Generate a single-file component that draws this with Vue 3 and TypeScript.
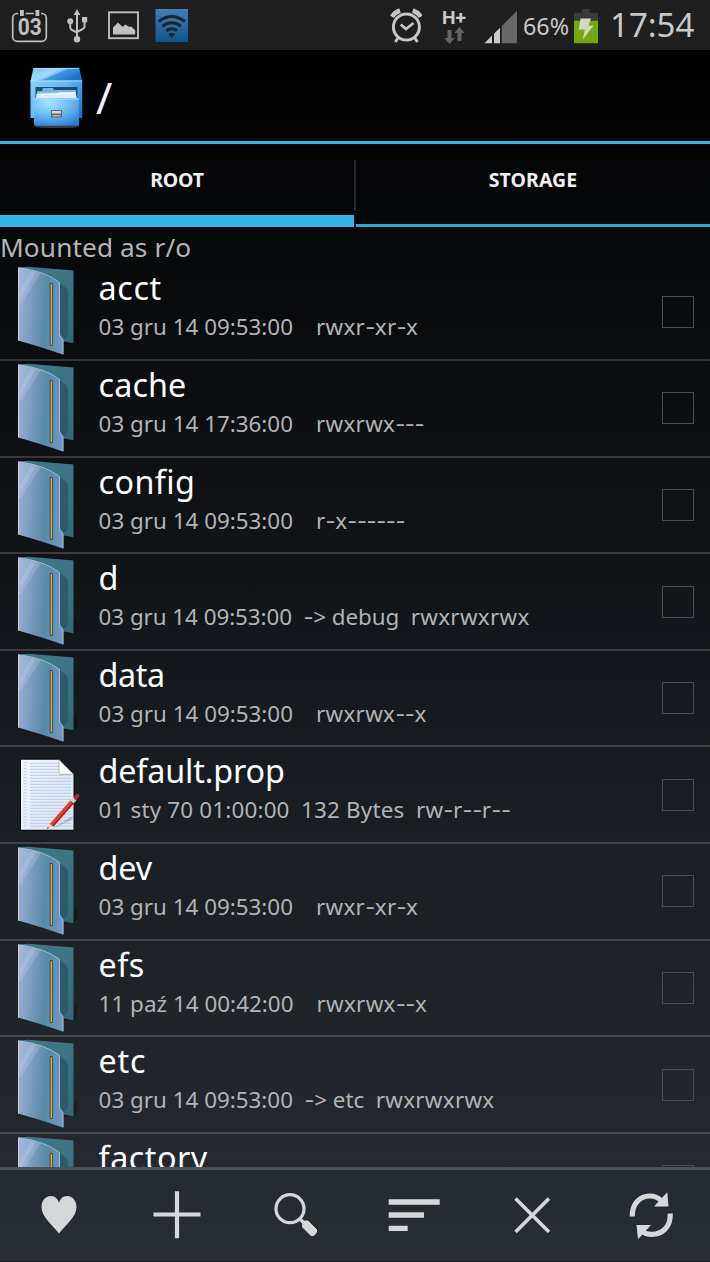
<script setup lang="ts">
interface Entry {
  name: string
  date: string
  info: string
  perms: string
  kind: 'folder' | 'file'
  // Letter spacing in px for the name and for the date/info part of the line below.
  nameTrack: number
  metaTrack: number
}

const entries: Entry[] = [
  { name: 'acct', date: '03 gru 14 09:53:00', info: '', perms: 'rwxr-xr-x', kind: 'folder', nameTrack: 0.6, metaTrack: 0 },
  { name: 'cache', date: '03 gru 14 17:36:00', info: '', perms: 'rwxrwx---', kind: 'folder', nameTrack: 0.1, metaTrack: 0 },
  { name: 'config', date: '03 gru 14 09:53:00', info: '', perms: 'r-x------', kind: 'folder', nameTrack: 0.4, metaTrack: 0 },
  { name: 'd', date: '03 gru 14 09:53:00', info: '-> debug', perms: 'rwxrwxrwx', kind: 'folder', nameTrack: 0, metaTrack: -0.05 },
  { name: 'data', date: '03 gru 14 09:53:00', info: '', perms: 'rwxrwx--x', kind: 'folder', nameTrack: -0.4, metaTrack: 0 },
  { name: 'default.prop', date: '01 sty 70 01:00:00', info: '132 Bytes', perms: 'rw-r--r--', kind: 'file', nameTrack: -0.15, metaTrack: 0.18 },
  { name: 'dev', date: '03 gru 14 09:53:00', info: '', perms: 'rwxr-xr-x', kind: 'folder', nameTrack: -0.1, metaTrack: 0 },
  { name: 'efs', date: '11 paź 14 00:42:00', info: '', perms: 'rwxrwx--x', kind: 'folder', nameTrack: 0.4, metaTrack: 0.03 },
  { name: 'etc', date: '03 gru 14 09:53:00', info: '-> etc', perms: 'rwxrwxrwx', kind: 'folder', nameTrack: 0.8, metaTrack: 0 },
  { name: 'factory', date: '03 gru 14 09:53:00', info: '', perms: 'r-x------', kind: 'folder', nameTrack: 0.5, metaTrack: 0 },
]

// Hyphens are drawn in a wider face than letters, so the string is split into runs.
const runs = (text: string): string[] => text.match(/-+|[^-]+/g) ?? []
</script>

<template>
  <div class="screen">
    <svg class="defs" width="0" height="0" aria-hidden="true">
      <defs>
        <linearGradient id="cover" x1="0" y1="0" x2="1" y2="0.1">
          <stop offset="0" stop-color="#9fb1d4" />
          <stop offset="0.3" stop-color="#7d9ec2" />
          <stop offset="0.65" stop-color="#568aa7" />
          <stop offset="1" stop-color="#7196bd" />
        </linearGradient>
        <linearGradient id="back" x1="0" y1="0" x2="0" y2="1">
          <stop offset="0" stop-color="#3f7787" />
          <stop offset="1" stop-color="#336773" />
        </linearGradient>
        <linearGradient id="paper" x1="0" y1="0" x2="1" y2="1">
          <stop offset="0" stop-color="#f3f6fd" />
          <stop offset="1" stop-color="#dbe4f5" />
        </linearGradient>
        <linearGradient id="wifi" x1="0" y1="0" x2="0" y2="1">
          <stop offset="0" stop-color="#3f80b7" />
          <stop offset="1" stop-color="#11558f" />
        </linearGradient>
        <linearGradient id="cabTop" x1="0" y1="0" x2="1" y2="0.5">
          <stop offset="0" stop-color="#52b2f2" />
          <stop offset="0.45" stop-color="#8dd1fb" />
          <stop offset="0.6" stop-color="#3f99e6" />
          <stop offset="1" stop-color="#1c71cc" />
        </linearGradient>
        <linearGradient id="cabBody" x1="0" y1="0" x2="1" y2="0.7">
          <stop offset="0" stop-color="#8bd3fc" />
          <stop offset="0.5" stop-color="#62b6f3" />
          <stop offset="1" stop-color="#2276cd" />
        </linearGradient>
        <radialGradient id="cabDrawer" cx="0.35" cy="0.15" r="1">
          <stop offset="0" stop-color="#a6e4ff" />
          <stop offset="0.5" stop-color="#66b9f4" />
          <stop offset="1" stop-color="#2776c9" />
        </radialGradient>
      </defs>
    </svg>

    <header class="status">
      <svg class="cal" width="38" height="36" viewBox="11 8 38 36">
        <rect x="12.700" y="13.500" width="33.600" height="27.800" rx="4.500" fill="none" stroke="#bfbfbf" stroke-width="1.700" />
        <path d="M18.200 13.500h7.400M33.700 13.500h7.400" stroke="#1f1f1f" stroke-width="4" />
        <path d="M20 10h3.800v6H20zM35.500 10h3.800v6h-3.800z" fill="#bfbfbf" />
        <text x="29.700" y="35" text-anchor="middle" class="cal-text" textLength="24" lengthAdjust="spacingAndGlyphs">03</text>
      </svg>
      <svg class="usb" width="24" height="36" viewBox="65 8 24 36">
        <g fill="none" stroke="#bfbfbf" stroke-width="2">
          <path d="M77 14v24M70.200 22v5.500q0 1.500 1.500 2.300l5.300 2.700M84.500 20v6.500q0 1.500-1.500 2.300l-6 3.200" />
        </g>
        <path d="M77 9l3.300 6h-6.600zM82 17h5.200v5.200H82z" fill="#bfbfbf" />
        <circle cx="70.200" cy="21.300" r="3" fill="#bfbfbf" />
        <circle cx="77" cy="39.200" r="3.200" fill="#bfbfbf" />
      </svg>
      <svg class="pic" width="31" height="36" viewBox="108 8 31 36">
        <rect x="109" y="12.300" width="29" height="25.900" fill="none" stroke="#bfbfbf" stroke-width="1.900" />
        <path d="M113 34.500v-7l5-5 4.500 4.200 3-2.200 3.300 2.300 2.400-.3 4 3.700v4.300z" fill="#bfbfbf" />
      </svg>
      <svg class="wifi" width="33" height="36" viewBox="155 8 33 36">
        <rect x="155.500" y="9" width="32.500" height="33" fill="url(#wifi)" />
        <g fill="none" stroke="#1f2429" stroke-width="3">
          <path d="M158.500 21.500q13.200-10 26.400 0M162.300 26.300q9.400-7 18.800 0M166.300 30.800q5.400-4 10.800 0" />
        </g>
        <path d="M168.300 34.300q3.400-2.500 6.800 0l-3.400 3.600z" fill="#1f2429" />
      </svg>
      <span class="spacer"></span>
      <svg class="alarm" width="32" height="36" viewBox="390 8 32 36">
        <g fill="none" stroke="#c6c6c6">
          <circle cx="406.400" cy="27" r="13" stroke-width="3" />
          <path d="M400.700 24.500l5.300 4.500 7.500-6" stroke-width="2.800" />
          <path d="M392 16.800q3-4.600 8-6.300M420.800 16.800q-3-4.600-8-6.300" stroke-width="4.600" />
          <path d="M398 38l-2.700 4M414.800 38l2.700 4" stroke-width="3" />
        </g>
      </svg>
      <svg class="net" width="26" height="36" viewBox="441 8 26 36">
        <text x="442" y="24" class="net-text" textLength="24" lengthAdjust="spacingAndGlyphs">H+</text>
        <path d="M447.500 30h4v8h3.200l-5.200 6-5.200-6h3.200zM457.500 41v-8h-3.200l5.200-6 5.200 6h-3.200v8z" fill="#666" />
      </svg>
      <svg class="signal" width="33" height="36" viewBox="484 8 33 36">
        <path d="M501.800 43.200V26l15.200-15.200v32.400z" fill="#686868" />
        <path d="M484.500 43.200l7.500-7.700v7.700zM494 43.200v-9.500l6-6v15.500z" fill="#cacaca" />
      </svg>
      <span class="percent">66%</span>
      <svg class="battery" width="24" height="36" viewBox="574 8 24 36">
        <path d="M574 12.800h8V9h7.500v3.800h8.500V22h-24z" fill="#3a3a3a" />
        <path d="M574 20.700h24v22.500h-24z" fill="#78a70d" />
        <path d="M580.500 18.500h10.500l-2.500 7.300h5l-10.700 13.700 2-10h-6z" fill="#d3d7c6" />
      </svg>
      <span class="clock">17:54</span>
    </header>

    <div class="title">
      <svg class="cabinet" width="56" height="64" viewBox="28 66 56 64">
        <ellipse cx="57" cy="126.500" rx="22" ry="1.600" fill="#3a3a3a" />
        <path d="M33.500 68h45.700l3 13H30.500z" fill="url(#cabTop)" />
        <path d="M33.500 68.400h45.700" stroke="#9ed9fb" />
        <path d="M33.500 69h34L42 80H31z" fill="#c6ebff" opacity=".35" />
        <path d="M30.500 80.500h51.700V118h-3.200v7.500H34.200V118h-3.700z" fill="url(#cabBody)" />
        <path d="M30.500 81h51.700" stroke="#a9e0ff" />
        <path d="M35.500 87h42v11h-42z" fill="#28496f" />
        <path d="M37 91h5l1-3h10l1 2h22v8H37z" fill="#75b9e8" />
        <path d="M36.500 93.500l39-1.500 1.300 6H36z" fill="#d9eefb" />
        <path d="M38 94.500h20l1.500-1.500H75" fill="none" stroke="#fff" stroke-width="1.200" />
        <path d="M34.200 98.500h44.500v27H34.200z" fill="url(#cabDrawer)" />
        <path d="M34.200 99h44.500" stroke="#b8e7ff" />
        <path d="M51 110h11v7.500H51z" fill="#65686a" />
        <path d="M52 111h9v2.500h-9z" fill="#d8d8d6" />
        <path d="M52.500 115h8v1.500h-8z" fill="#b5b5b0" />
        <circle cx="74.700" cy="103.700" r="1.600" fill="#9b9b95" />
      </svg>
      <span class="path">/</span>
    </div>

    <nav class="tabs">
      <div class="tab active"><span>ROOT</span></div>
      <i class="divider"></i>
      <div class="tab storage"><span>STORAGE</span></div>
    </nav>

    <div class="mount">Mounted as r/o</div>

    <main class="list">
      <div v-for="entry in entries" :key="entry.name" class="row">
        <svg v-if="entry.kind === 'folder'" class="icon" width="66" height="92" viewBox="0 0 66 92">
          <path d="M46 78l12-1q5-1 3-9v-8" fill="#000" opacity=".25" />
          <path d="M2 1.500L12 .700 57.500 4.500V77.200L40 74z" fill="url(#back)" />
          <path d="M44 17l5 4q3 2 3 7v38q-1 8-5 6l-4-8z" fill="#254f5a" opacity=".6" />
          <path d="M2 1.500Q29 5 43.700 16.500V69l3.700 5v14.700Q22 80 2 74.500z" fill="url(#cover)" />
          <path d="M3 2l22 5L5 38H3z" fill="#c8d5ee" opacity=".25" />
          <path d="M15 5l5 1L4 33v-8z" fill="#d3def2" opacity=".22" />
          <path d="M2.500 1.800Q29 5 43.500 16.500V69l3.500 5v14" fill="none" stroke="#a1bfdb" stroke-width=".9" />
          <path d="M2.500 2v72.500" stroke="#c2d2e9" />
          <rect x="33.700" y="17" width="3" height="63" rx="1.300" fill="#3b3a31" />
          <path d="M35.300 18v61" stroke="#c9ad6b" stroke-width="1.400" />
        </svg>
        <svg v-else class="icon" width="66" height="92" viewBox="0.500 2.700 66 92">
          <path d="M4.500 12.500h39L59 27.500v57H4.500z" fill="#050505" opacity=".7" />
          <path d="M5.500 13.500h38L58 28v55.500H5.500z" fill="url(#paper)" />
          <path d="M14.500 17h29M14.500 20h29M14.500 23h29M14.500 26h29M14.500 29h41M14.500 32h41M14.500 35h41M14.500 38h41M14.500 41h41M14.500 44h41M14.500 47h41M14.500 50h41M14.500 53h41M14.500 56h41M14.500 59h41M14.500 62h41M14.500 65h41M14.500 68h41M14.500 71h41M14.500 74h41M14.500 77h41M14.500 80h41" stroke="#b9c7e2" stroke-width=".9" />
          <path d="M9.500 16v66" stroke="#c3cbe0" stroke-width="3" stroke-dasharray="1 2" />
          <path d="M43.500 13.500L58 28H43.500z" fill="#fff" stroke="#9a9da4" stroke-width=".7" />
          <path d="M37 82l20-12v3L42 80z" fill="#687082" opacity=".4" />
          <path d="M31 83l3.500-6 3.500 3.500z" fill="#e5d9cb" />
          <path d="M31 83l1.400-2.300 1.100 1.100z" fill="#444" />
          <path d="M36.300 79l21.500-24.500" stroke="#a51b17" stroke-width="4.400" />
          <path d="M35.800 78.500l21.500-24.500" stroke="#f23c30" stroke-width="2.800" />
          <path d="M56.500 55.500l3-3.300" stroke="#c9d3da" stroke-width="4.500" />
          <path d="M60.300 51.500l1.700-2" stroke="#c2271f" stroke-width="3.800" stroke-linecap="round" />
        </svg>
        <div class="text">
          <div class="name" :style="{ letterSpacing: entry.nameTrack + 'px' }">{{ entry.name }}</div>
          <div class="meta" :style="{ letterSpacing: entry.metaTrack + 'px' }">
            <span>{{ entry.date }}</span><span class="info"><span
              v-for="(run, i) in runs(entry.info)" :key="i" :class="{ dash: run[0] === '-' }">{{ run }}</span></span><span
              class="perms"><span v-for="(run, i) in runs(entry.perms)" :key="i" :class="{ dash: run[0] === '-' }">{{ run }}</span></span>
          </div>
        </div>
        <span class="box"></span>
      </div>
    </main>

    <footer class="bar">
      <div class="action">
        <svg width="60" height="60" viewBox="0 0 60 60">
          <path d="M30 49.500C23.500 41 12.500 33 12.500 23c0-6 3.700-11 9.300-11 4.200 0 7.200 2.800 8.200 7 1-4.200 4-7 8.200-7C43.800 12 47.500 17 47.500 23c0 10-11 18-17.500 26.500z" fill="#d6d7d9" />
        </svg>
      </div>
      <div class="action">
        <svg width="60" height="60" viewBox="0 0 60 60">
          <path d="M30 7.300v47M6.500 30.500h47" stroke="#d6d7d9" stroke-width="4.200" />
        </svg>
      </div>
      <div class="action">
        <svg width="60" height="60" viewBox="0 0 60 60">
          <circle cx="24" cy="24.700" r="14" fill="none" stroke="#d6d7d9" stroke-width="3.200" />
          <path d="M33 34l5 5" stroke="#d6d7d9" stroke-width="3.400" />
          <path d="M37 38.500l1.800-1.500h3.200l8.500 8.500v2.500l-2.500 3.500h-3L36.500 43z" fill="#d6d7d9" stroke="#d6d7d9" stroke-linejoin="round" />
        </svg>
      </div>
      <div class="action">
        <svg width="60" height="60" viewBox="0 0 60 60">
          <path d="M4.700 15.300h51v5.400h-51zM4.700 28.300h35.300v5.500H4.700zM4.700 41.700h19v5.300h-19z" fill="#d6d7d9" />
        </svg>
      </div>
      <div class="action">
        <svg width="60" height="60" viewBox="0 0 60 60">
          <path d="M13.500 14.500l33.500 33.500M47 14.500L13.500 48" stroke="#d6d7d9" stroke-width="3.600" />
        </svg>
      </div>
      <div class="action">
        <svg width="60" height="60" viewBox="0 0 60 60">
          <g fill="none" stroke="#d6d7d9" stroke-width="5.200">
            <path d="M11.300 32.500C11 19 19.500 12.200 28.500 12q7-.2 12 5" />
            <path d="M49.200 29.500C50 43.500 40.500 50.300 31 50.400q-7 .1-11-4" />
          </g>
          <path d="M46.300 8.300l1.200 14.200H33zM17 55.300l-1.500-14.300H30z" fill="#d6d7d9" />
        </svg>
      </div>
    </footer>
  </div>
</template>

<style>
html,
body {
  margin: 0;
  background: #000;
}
</style>

<style scoped>
.screen {
  width: 710px;
  height: 1262px;
  overflow: hidden;
  display: flex;
  flex-direction: column;
  position: relative;
  font-family: "Noto Sans", "Open Sans", sans-serif;
  background: linear-gradient(#000 50px, #08090b 250px, #14171b 650px, #202429 1000px, #282c33 1262px);
}

.defs {
  position: absolute;
}

svg {
  display: block;
  flex: none;
}

.status {
  flex: none;
  height: 50px;
  box-sizing: border-box;
  padding: 8px 14px 0 11px;
  display: flex;
  align-items: flex-start;
  background: #1f1f1f;
  color: #c9c9c9;
}

.cal-text {
  font: bold 23.5px Roboto, sans-serif;
  fill: #bfbfbf;
}

.net-text {
  font: bold 18.5px Roboto, sans-serif;
  fill: #c9c9c9;
}

.usb {
  margin-left: 16px;
}

.pic {
  margin-left: 19px;
}

.wifi {
  margin-left: 16px;
}

.spacer {
  flex: 1;
}

.net {
  margin-left: 19px;
}

.signal {
  margin-left: 17px;
}

.percent {
  width: 50px;
  margin-left: 6px;
  font-size: 23.3px;
  line-height: 36px;
}

.battery {
  margin-left: 1px;
}

.clock {
  width: 86px;
  margin-left: 12px;
  font-size: 33px;
  line-height: 34px;
  white-space: nowrap;
}

.title {
  flex: none;
  height: 91px;
  display: flex;
  padding-left: 28px;
  border-bottom: 3px solid #33b5e5;
}

.cabinet {
  margin-top: 16px;
}

.path {
  margin-left: 12px;
  font-size: 44px;
  line-height: 94px;
  color: #f3f3f3;
}

.tabs {
  flex: none;
  height: 83px;
  display: flex;
}

.tab {
  width: 354px;
  height: 83px;
  box-sizing: border-box;
  text-align: center;
  font-size: 19.5px;
  font-weight: 700;
  line-height: 71px;
  letter-spacing: -0.15px;
  color: #f0f0f0;
  border-bottom: 3px solid #2ea5d2;
}

.tab.storage {
  letter-spacing: 0.1px;
}

.tab.active {
  border-bottom: 12px solid #33b5e5;
}

.divider {
  width: 2px;
  height: 51px;
  margin-top: 16px;
  background: #26282a;
}

.mount {
  flex: none;
  height: 37.4px;
  font-size: 26.2px;
  line-height: 40px;
  letter-spacing: 0.12px;
  color: #b4b5b6;
}

.list {
  flex: 1;
  min-height: 0;
  overflow: hidden;
}

.row {
  height: 96.6px;
  box-sizing: border-box;
  display: flex;
  padding: 0 16px;
  border-bottom: 2px solid rgba(255, 255, 255, 0.17);
}

.icon {
  margin-top: 2px;
}

.text {
  flex: 1;
  padding-left: 16.6px;
}

.name {
  height: 46px;
  font-size: 32.3px;
  line-height: 46px;
  color: #fff;
}

.meta {
  font-size: 22.4px;
  line-height: 34px;
  color: #b2b3b5;
  white-space: nowrap;
}

.info {
  margin: 0 11.5px;
}

.perms {
  letter-spacing: 0.3px;
}

.dash {
  font-family: Inter, "Noto Sans", sans-serif;
  font-size: 22px;
  line-height: 1;
  letter-spacing: -0.5px;
}

.box {
  flex: none;
  width: 32px;
  height: 32px;
  box-sizing: border-box;
  margin-top: 31.4px;
  border: 1.5px solid #4b4d50;
}

.bar {
  flex: none;
  height: 95px;
  box-sizing: border-box;
  display: flex;
  background: linear-gradient(#252930, #292d34);
  border-top: 3px solid #4d5156;
  border-bottom: 1px solid #1f1a24;
}

.action {
  flex: 1;
  display: flex;
  justify-content: center;
  padding-top: 14px;
}
</style>
